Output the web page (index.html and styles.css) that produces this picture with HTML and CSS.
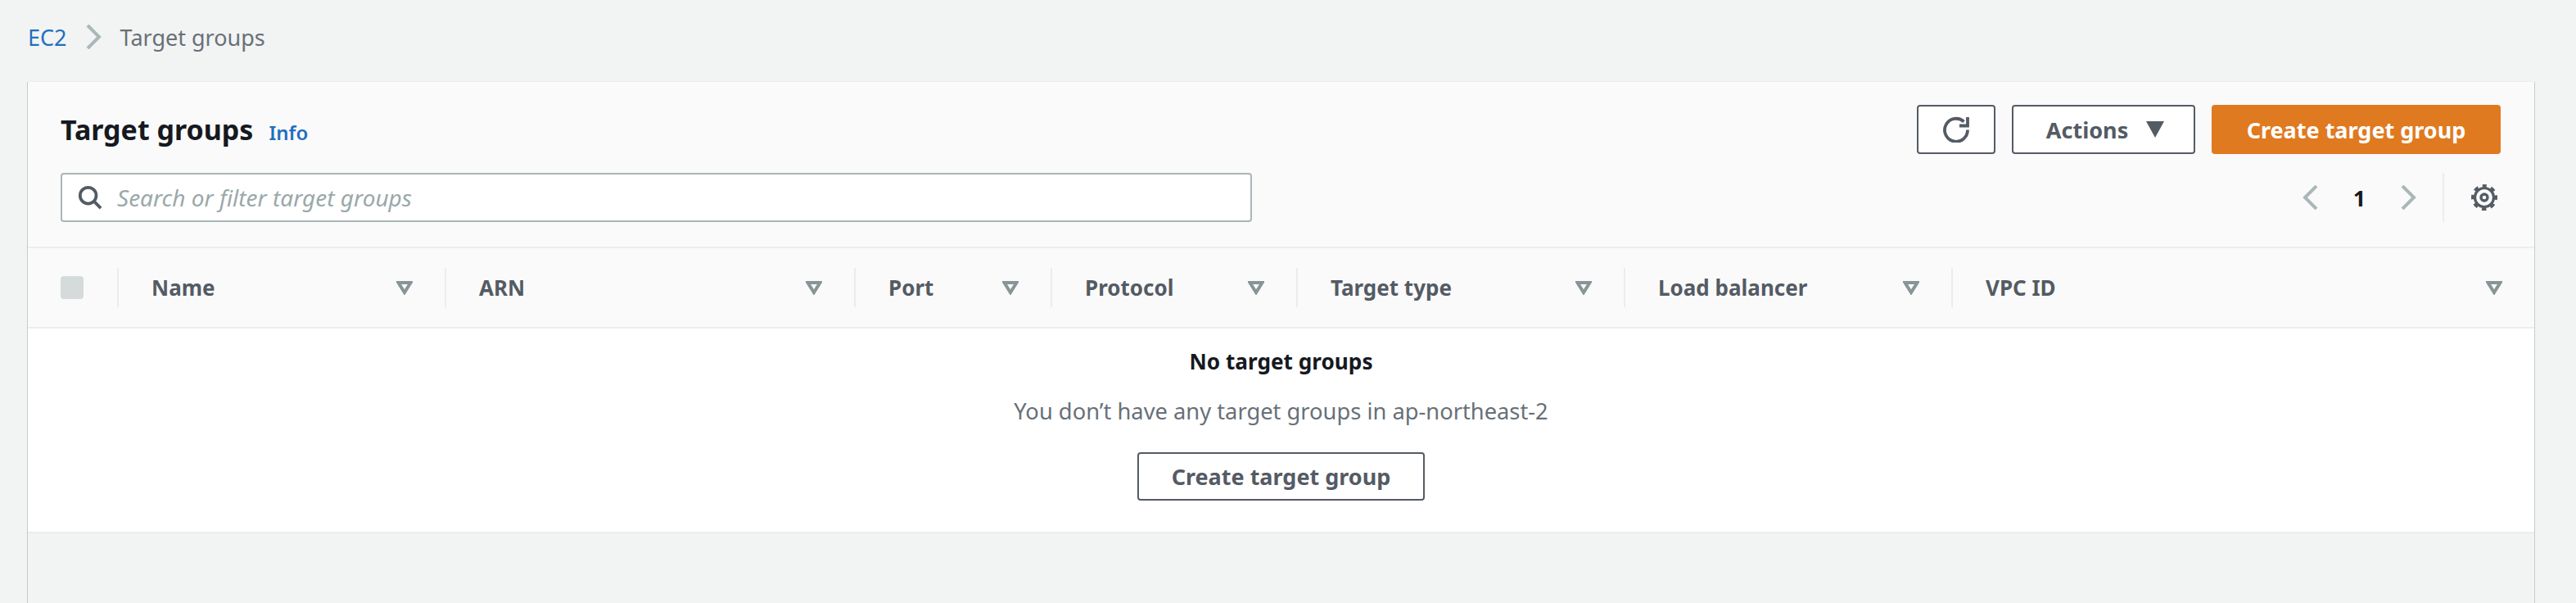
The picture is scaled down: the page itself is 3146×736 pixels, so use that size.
FILE: index.html
```html
<!DOCTYPE html>
<html lang="en">
<head>
<meta charset="utf-8">
<title>Target groups</title>
<link rel="stylesheet" href="styles.css">
</head>
<body>
<nav class="crumbs">
  <a class="crumb-link">EC2</a>
  <svg class="crumb-sep" viewBox="0 0 19 30"><path d="M2 1l14 14L2 29" fill="none" stroke="#aab7b8" stroke-width="4"/></svg>
  <span class="crumb-current">Target groups</span>
</nav>
<main class="panel">
  <header class="panel-head">
    <div class="head-row">
      <div class="title-wrap">
        <h1 class="title">Target groups</h1>
        <a class="info">Info</a>
      </div>
      <div class="actions">
        <button class="btn btn-refresh"><svg class="refresh-icon" viewBox="0 0 32 32"><path d="M25.500 6.500A14 14 0 1 0 30 16.500" fill="none" stroke="#545b64" stroke-width="3.800"/><path d="M30 1v10.500H20" fill="none" stroke="#545b64" stroke-width="3.800"/></svg></button>
        <button class="btn btn-actions">Actions<svg class="caret" viewBox="0 0 20 18"><path d="M0 0h20L10 18z" fill="#545b64"/></svg></button>
        <button class="btn btn-primary">Create target group</button>
      </div>
    </div>
    <div class="tools-row">
      <div class="search">
        <svg class="search-icon" viewBox="0 0 32 32"><circle cx="13.500" cy="13.500" r="10.500" fill="none" stroke="#545b64" stroke-width="4"/><path d="M21 21l9 9" stroke="#545b64" stroke-width="4" fill="none"/></svg>
        <span class="placeholder">Search or filter target groups</span>
      </div>
      <div class="pager">
        <svg class="page-arrow" viewBox="0 0 19 30"><path d="M17 1L3 15l14 14" fill="none" stroke="#aab7b8" stroke-width="4"/></svg>
        <span class="page-num">1</span>
        <svg class="page-arrow" viewBox="0 0 19 30"><path d="M2 1l14 14L2 29" fill="none" stroke="#aab7b8" stroke-width="4"/></svg>
        <span class="pager-div"></span>
        <svg class="gear" viewBox="0 0 32 32"><circle cx="16" cy="16" r="11.500" fill="none" stroke="#545b64" stroke-width="3.200"/><circle cx="16" cy="16" r="14.200" fill="none" stroke="#545b64" stroke-width="3.600" stroke-dasharray="5.576 5.576" stroke-dashoffset="2.788" transform="rotate(-90 16 16)"/><circle cx="16" cy="16" r="4" fill="none" stroke="#545b64" stroke-width="3.400"/></svg>
      </div>
    </div>
  </header>
  <div class="table-head">
    <div class="th th-check"><span class="checkbox"></span></div>
    <div class="th"><span class="th-label">Name</span><svg class="sort" viewBox="0 0 20 17"><path d="M2.500 2h15L10 14z" fill="none" stroke="#879596" stroke-width="4"/></svg></div>
    <div class="th"><span class="th-label">ARN</span><svg class="sort" viewBox="0 0 20 17"><path d="M2.500 2h15L10 14z" fill="none" stroke="#879596" stroke-width="4"/></svg></div>
    <div class="th"><span class="th-label">Port</span><svg class="sort" viewBox="0 0 20 17"><path d="M2.500 2h15L10 14z" fill="none" stroke="#879596" stroke-width="4"/></svg></div>
    <div class="th"><span class="th-label">Protocol</span><svg class="sort" viewBox="0 0 20 17"><path d="M2.500 2h15L10 14z" fill="none" stroke="#879596" stroke-width="4"/></svg></div>
    <div class="th"><span class="th-label">Target type</span><svg class="sort" viewBox="0 0 20 17"><path d="M2.500 2h15L10 14z" fill="none" stroke="#879596" stroke-width="4"/></svg></div>
    <div class="th"><span class="th-label">Load balancer</span><svg class="sort" viewBox="0 0 20 17"><path d="M2.500 2h15L10 14z" fill="none" stroke="#879596" stroke-width="4"/></svg></div>
    <div class="th"><span class="th-label">VPC ID</span><svg class="sort" viewBox="0 0 20 17"><path d="M2.500 2h15L10 14z" fill="none" stroke="#879596" stroke-width="4"/></svg></div>
  </div>
  <section class="empty">
    <h2 class="empty-title">No target groups</h2>
    <p class="empty-text">You don’t have any target groups in ap-northeast-2</p>
    <button class="btn btn-empty">Create target group</button>
  </section>
</main>
</body>
</html>
```
FILE: styles.css
```css
* { box-sizing: border-box; }
html, body { margin: 0; padding: 0; }
body {
  background: #f2f3f3;
  color: #16191f;
  font-family: "Noto Sans", "Open Sans", sans-serif;
  font-size: 28px;
  height: 736px;
  overflow: hidden;
}
.crumbs {
  display: flex;
  align-items: center;
  height: 100px;
  padding: 0 0 10px 34px;
}
.crumb-link { color: #1f6fc0; font-size: 27px; }
.crumb-sep { width: 19px; height: 30px; margin: 0 23px; }
.crumb-current { color: #687078; font-size: 27px; }
.panel {
  margin: 0 51px 0 34px;
  height: 636px;
  background: #f2f3f3;
  box-shadow: 1px 0 0 0 #c6cccc, -1px 0 0 0 #c6cccc, 0 -1px 0 0 #eceeee;
}
.panel-head {
  background: #fafafa;
  height: 203px;
  padding: 28px 41px 0 40px;
  border-bottom: 2px solid #eaeded;
}
.head-row { display: flex; justify-content: space-between; align-items: flex-start; height: 60px; }
.title-wrap { display: flex; align-items: baseline; gap: 19px; padding-top: 6px; }
.title { margin: 0; font-size: 34px; font-weight: 700; line-height: 48px; color: #16191f; }
.info { color: #1f6fc0; font-size: 24px; font-weight: 600; }
.actions { display: flex; gap: 20px; }
.btn {
  height: 60px;
  border: 2px solid #545b64;
  border-radius: 4px;
  background: #fff;
  color: #545b64;
  font: 700 27px "Noto Sans", "Open Sans", sans-serif;
  display: flex;
  align-items: center;
  justify-content: center;
  padding: 0;
}
.btn-refresh { width: 96px; }
.refresh-icon { width: 32px; height: 32px; }
.btn-actions { width: 224px; gap: 22px; padding-left: 4px; }
.caret { width: 22px; height: 20px; }
.btn-primary { width: 353px; background: #e07a20; border-color: #e07a20; color: #fff; }
.tools-row { display: flex; justify-content: space-between; align-items: flex-start; margin-top: 23px; }
.search {
  width: 1455px;
  height: 60px;
  background: #fff;
  border: 2px solid #aab7b8;
  border-radius: 4px;
  display: flex;
  align-items: center;
  padding-left: 19px;
  gap: 18px;
}
.search-icon { width: 30px; height: 30px; }
.placeholder { color: #9aa8a9; font-style: italic; font-size: 28px; }
.pager { display: flex; align-items: center; height: 60px; padding-right: 4px; }
.page-arrow { width: 19px; height: 30px; }
.page-num { width: 101px; text-align: center; font-weight: 700; font-size: 27px; color: #16191f; }
.pager-div { width: 2px; height: 60px; background: #eaeded; margin: 0 33px 0 32px; }
.gear { width: 32px; height: 32px; }
.table-head {
  display: grid;
  grid-template-columns: 109px 400px 500px 240px 300px 400px 400px 1fr;
  height: 98px;
  background: #fafafa;
  border-bottom: 2px solid #eaeded;
  align-items: center;
}
.th {
  display: flex;
  align-items: center;
  justify-content: space-between;
  height: 48px;
  padding: 0 39px 0 40px;
  border-left: 2px solid #eaeded;
}
.th-check { border-left: 0; padding: 0 0 0 40px; justify-content: flex-start; }
.checkbox { width: 28px; height: 28px; border-radius: 4px; background: #d5dbdb; }
.th-label { color: #545b64; font-size: 26px; font-weight: 700; }
.sort { width: 20px; height: 17px; }
.empty {
  height: 250px;
  background: #fff;
  border-bottom: 2px solid #eaeded;
  display: flex;
  flex-direction: column;
  align-items: center;
  padding-top: 20px;
}
.empty-title { margin: 0; font-size: 26.200px; font-weight: 700; line-height: 40px; color: #16191f; }
.empty-text { margin: 21px 0 0; font-size: 27.300px; line-height: 40px; color: #687078; }
.btn-empty { width: 351px; height: 59px; margin-top: 30px; }
```
